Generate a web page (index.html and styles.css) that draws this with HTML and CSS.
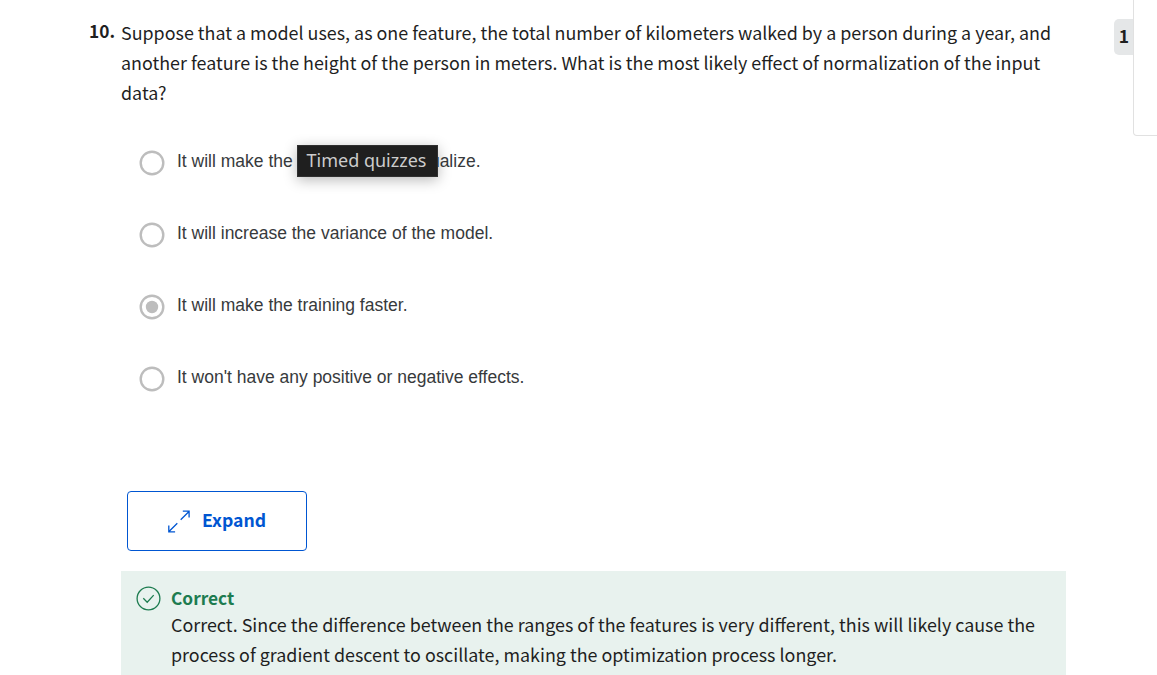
FILE: index.html
```html
<!DOCTYPE html>
<html lang="en">
<head>
<meta charset="utf-8">
<title>Quiz</title>
<link rel="stylesheet" href="styles.css">
</head>
<body>
<div class="page">
  <main class="question">
    <div class="number">10.</div>
    <div class="content">
      <p class="prompt">Suppose that a model uses, as one feature, the total number of kilometers walked by a person during a year, and<br>another feature is the height of the person in meters. What is the most likely effect of normalization of the input<br>data?</p>
      <div class="options">
        <label class="option"><svg class="radio" viewBox="0 0 26 26"><circle cx="13" cy="13" r="11.3"/></svg><span class="label label-split"><span>It will make the</span><span>ualize.</span><span class="tooltip">Timed quizzes</span></span></label>
        <label class="option"><svg class="radio" viewBox="0 0 26 26"><circle cx="13" cy="13" r="11.3"/></svg><span class="label">It will increase the variance of the model.</span></label>
        <label class="option"><svg class="radio" viewBox="0 0 26 26"><circle cx="13" cy="13" r="11.3"/><circle class="dot" cx="13" cy="13" r="6.2"/></svg><span class="label">It will make the training faster.</span></label>
        <label class="option"><svg class="radio" viewBox="0 0 26 26"><circle cx="13" cy="13" r="11.3"/></svg><span class="label">It won't have any positive or negative effects.</span></label>
      </div>
      <button class="expand" type="button">
        <svg width="24" height="24" viewBox="0 0 24 24" fill="none" stroke="currentColor" stroke-width="1.3"><path d="M13.7 10.8 22 2.5M15.8 2.2H22.1V8.5M10.3 14.2 2 22.5M1.8 16.5V22.8H8.1"/></svg>
        <span>Expand</span>
      </button>
      <section class="feedback">
        <svg class="tick" width="25" height="25" viewBox="0 0 25 25" fill="none" stroke="currentColor" stroke-width="1.3"><circle cx="12.5" cy="12.5" r="11.4"/><path d="M7.3 12.3 11.2 16.2 17.7 9.1"/></svg>
        <div>
          <h3>Correct</h3>
          <p>Correct. Since the difference between the ranges of the features is very different, this will likely cause the<br>process of gradient descent to oscillate, making the optimization process longer.</p>
        </div>
      </section>
    </div>
  </main>
  <aside class="side">
    <div class="points">1</div>
    <div class="panel"></div>
  </aside>
</div>
</body>
</html>
```
FILE: styles.css
```css
* { box-sizing: border-box; }
body { margin: 0; background: #fff; color: #1f1f1f; font: 17.9px/30px "Noto Sans CJK SC", "Open Sans", sans-serif; }
p, h3 { margin: 0; }
.page { display: flex; justify-content: space-between; width: 1157px; height: 675px; overflow: hidden; }
.question { display: flex; width: 1066px; padding: 17px 0 0 89px; }
.number { width: 32px; flex: none; font-size: 17.3px; font-weight: 700; line-height: 27px; }
.content { width: 945px; flex: none; white-space: nowrap; }
.options { display: flex; flex-direction: column; margin-top: 19px; }
.option { display: flex; align-items: center; height: 72px; padding-left: 18px; gap: 12px; }
.radio { width: 26px; height: 26px; margin-top: 1px; fill: none; stroke: #bdbdbd; stroke-width: 2.4; }
.radio .dot { fill: #bdbdbd; stroke: none; }
.label { position: relative; margin-top: -3px; color: #373a3c; font: 17.5px/26px "Liberation Sans", Arial, sans-serif; }
.label-split { display: flex; justify-content: space-between; width: 303.5px; }
.tooltip { position: absolute; left: 120px; top: -3px; width: 141px; height: 32px; border: 1px solid #303030; background: #1f1f1f; color: #ccc; font: 18px/29px "Noto Sans", sans-serif; text-align: center; text-indent: -2px; box-shadow: 0 3px 14px rgba(0,0,0,.28); }
.expand { display: flex; align-items: center; justify-content: center; gap: 11px; width: 180px; height: 60px; margin: 77px 0 0 6px; padding: 0 1px 0 0; border: 1px solid #0056d2; border-radius: 4px; background: #fff; color: #0056d2; font: 700 17.6px/27px "Noto Sans CJK SC", sans-serif; }
.expand span { margin-top: -3px; }
.feedback { display: flex; gap: 10px; height: 110px; margin-top: 20px; padding: 13px 15px; background: #e8f2ee; }
.tick { flex: none; margin-top: 2px; color: #1d7c50; }
.feedback h3 { color: #1d7c50; font-size: 17.3px; line-height: 27px; margin-bottom: -2px; }
.side { display: flex; width: 43px; }
.points { width: 19px; flex: none; height: 36px; margin-top: 19px; padding-left: 1px; border-radius: 5px 0 0 5px; background: #e5e7e8; font-size: 17.5px; font-weight: 700; line-height: 34px; text-align: center; }
.panel { width: 40px; height: 136px; flex: none; border: 1px solid #e1e1e1; border-top: 0; border-radius: 0 0 0 4px; }
```
